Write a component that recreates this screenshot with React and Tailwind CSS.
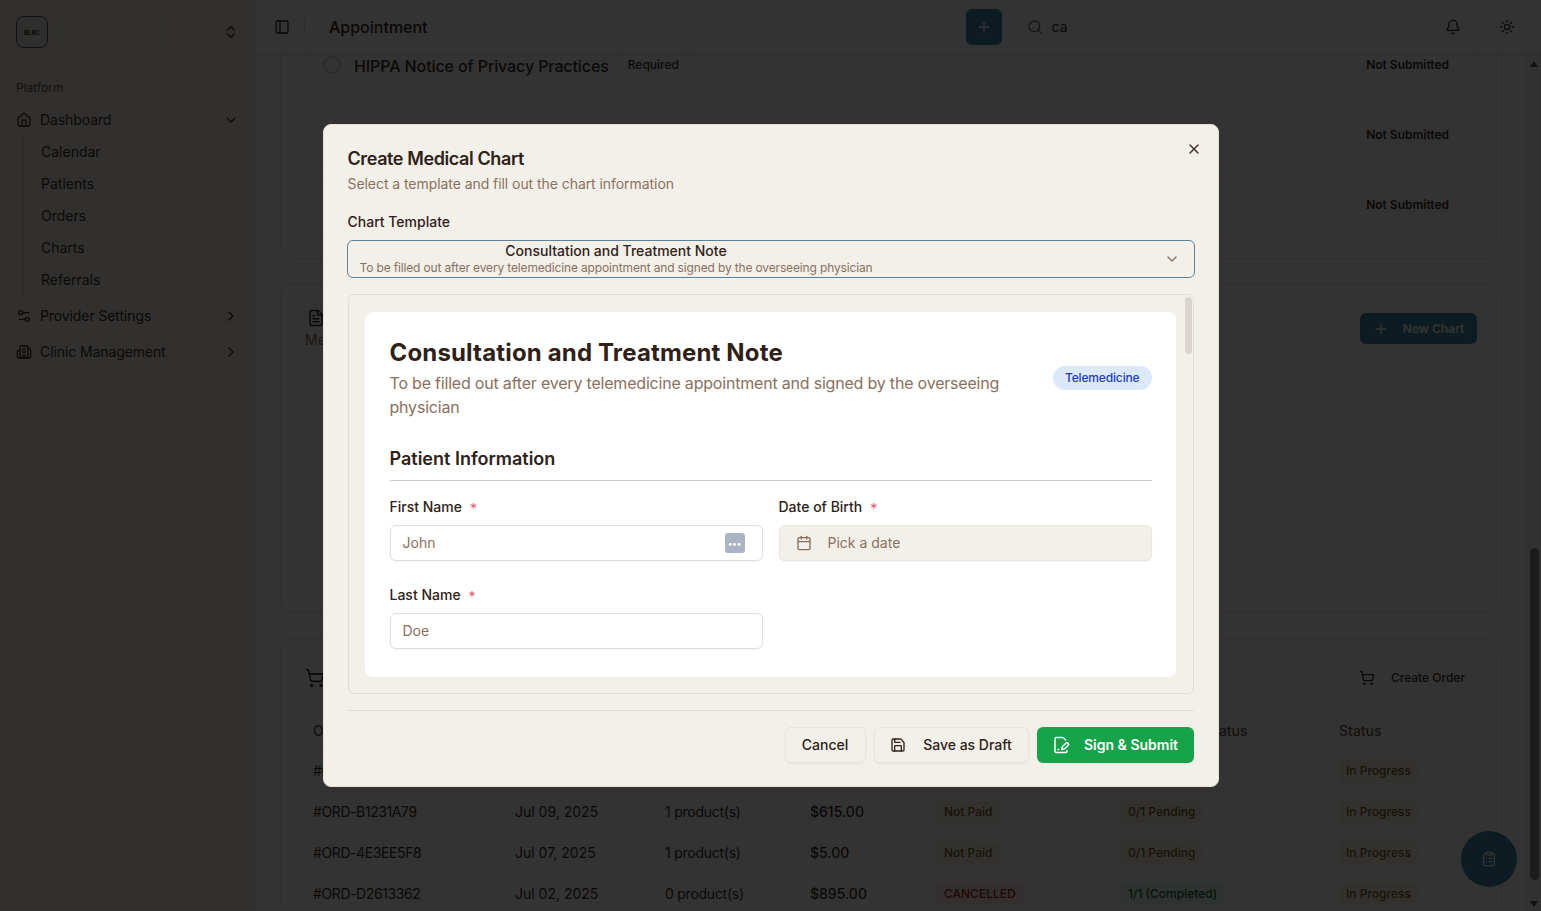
import React from "react";
import {
  Bell,
  Building2,
  Calendar,
  ChevronDown,
  ChevronRight,
  ChevronsUpDown,
  ClipboardList,
  FilePenLine,
  FileText,
  House,
  PanelLeft,
  Plus,
  Save,
  Search,
  Settings2,
  ShoppingCart,
  Sun,
  X,
} from "lucide-react";

const subItems = ["Calendar", "Patients", "Orders", "Charts", "Referrals"];

const orders = [
  { id: "#ORD", date: "", products: "", amount: "", payment: "", fulfilment: "", status: "In Progress" },
  { id: "#ORD-B1231A79", date: "Jul 09, 2025", products: "1 product(s)", amount: "$615.00", payment: "Not Paid", fulfilment: "0/1 Pending", status: "In Progress" },
  { id: "#ORD-4E3EE5F8", date: "Jul 07, 2025", products: "1 product(s)", amount: "$5.00", payment: "Not Paid", fulfilment: "0/1 Pending", status: "In Progress" },
  { id: "#ORD-D2613362", date: "Jul 02, 2025", products: "0 product(s)", amount: "$895.00", payment: "CANCELLED", fulfilment: "1/1 (Completed)", status: "In Progress" },
];

function Badge({ children, color }) {
  return <span className={`rounded px-[7px] py-[3px] text-xs font-medium ${color}`}>{children}</span>;
}

function Sidebar() {
  return (
    <aside className="flex w-[255px] shrink-0 flex-col border-r border-[#e4dfd7] bg-[#f3f0ea] px-4 pt-4 pb-4 text-[#3a2e26]">
      <div className="flex h-8 items-center">
        <div className="flex size-8 items-center justify-center rounded-lg border border-[#4a5660] bg-[#e9e8e6] text-[6px] font-bold">
          BLBC
        </div>
        <div className="ml-4 h-8 w-[100px] rounded bg-[#f1e9e2] blur-sm" />
        <ChevronsUpDown className="ml-auto -mr-[1px] size-4" />
      </div>
      <p className="mt-8 text-xs leading-4 text-[#6d5a4d]">Platform</p>
      <div className="mt-3 flex h-6 items-center gap-2 text-sm tracking-[-0.1px]">
        <House className="size-4" />
        Dashboard
        <ChevronDown className="ml-auto -mr-[1px] size-4" />
      </div>
      <div className="ml-[7px] border-l border-[#ddd7ce] pl-[17px] pt-1 pb-1">
        {subItems.map((item) => (
          <div key={item} className="flex h-8 items-center text-sm">
            {item}
          </div>
        ))}
      </div>
      <div className="mt-1 flex h-6 items-center gap-2 text-sm tracking-[-0.1px]">
        <Settings2 className="size-4" />
        Provider Settings
        <ChevronRight className="ml-auto -mr-[1px] size-4" />
      </div>
      <div className="mt-3 flex h-6 items-center gap-2 text-sm tracking-[-0.1px]">
        <Building2 className="size-4" />
        Clinic Management
        <ChevronRight className="ml-auto -mr-[1px] size-4" />
      </div>
      <div className="mt-auto h-[46px] rounded bg-[#f2ebe5] blur-sm" />
    </aside>
  );
}

function TopBar() {
  return (
    <header className="flex h-[55px] shrink-0 items-center border-b border-[#f0dcd0] bg-white pl-[19px] pr-4 text-[#3a2e26]">
      <PanelLeft className="size-4" />
      <div className="ml-[14px] h-4 w-px bg-[#e4dfd7]" />
      <span className="ml-6 text-base font-medium">Appointment</span>
      <button className="ml-[538px] flex size-9 items-center justify-center rounded-md bg-[#3f8ba8] text-white">
        <Plus className="size-4" />
      </button>
      <div className="ml-4 flex h-9 w-[400px] items-center gap-[9px] rounded-md border border-[#f5f3f0] px-2 text-sm">
        <Search className="size-4 text-[#7d5f50]" />
        ca
      </div>
      <button className="ml-[18px] flex size-9 items-center justify-center">
        <Bell className="size-4" />
      </button>
      <button className="ml-[18px] flex size-9 items-center justify-center rounded-md border border-[#f5f3f0]">
        <Sun className="size-4" />
      </button>
    </header>
  );
}

function DocRow({ children, title }) {
  return (
    <div className="flex h-[56px] items-center rounded-lg border border-[#f2efe9] pl-[17px] pr-[19px]">
      {title}
      <span className="ml-auto rounded px-2 py-1 text-xs font-semibold">{children}</span>
    </div>
  );
}

function Content() {
  return (
    <div className="min-w-0 flex-1 overflow-hidden pl-[25px] pr-[24px] text-[#3a2e26]">
      {/* scrolled part way down the page */}
      <div className="-mt-[38px] flex flex-col">
        <section className="flex h-[242px] flex-col justify-end gap-[14px] rounded-xl border border-[#f5e2dc] px-6 pb-[25px]">
          <DocRow
            title={
              <div className="flex items-center">
                <span className="size-[18px] rounded-full border-2 border-[#d8d4cd]" />
                <span className="ml-[13px] text-base leading-6 font-medium tracking-[-0.1px] translate-y-px">
                  HIPPA Notice of Privacy Practices
                </span>
                <span className="ml-2 rounded border border-[#f2efe9] px-[10px] py-[2px] text-xs font-medium">Required</span>
              </div>
            }
          >
            Not Submitted
          </DocRow>
          <DocRow>Not Submitted</DocRow>
          <DocRow>Not Submitted</DocRow>
        </section>

        <section className="mt-6 h-[330px] rounded-xl border border-[#f5e2dc] px-6 pt-6">
          <div className="flex items-start justify-between">
            <div>
              <FileText className="ml-[2px] mt-[1px] size-[18px]" />
              <p className="mt-[3px] text-sm text-[#7d6a5d]">Medical</p>
            </div>
            <button className="mt-[5px] flex h-[31px] w-[117px] items-center justify-center gap-[14px] rounded-md bg-[#3f8ba8] text-xs font-semibold text-white">
              <Plus className="size-4" />
              New Chart
            </button>
          </div>
        </section>

        <section className="mt-[25px] rounded-xl border border-[#f5e2dc] px-6 pt-[25px]">
          <div className="flex h-7 items-center justify-between">
            <ShoppingCart className="size-5" />
            <button className="flex h-7 w-[130px] items-center justify-center gap-4 rounded-md border border-[#f5f3f0] text-xs font-medium">
              <ShoppingCart className="size-4" />
              Create Order
            </button>
          </div>
          <div className="mt-[24px] grid h-[35px] grid-cols-[202px_150px_145px_127px_184px_218px_1fr] items-center border-b border-[#f2efe9] pb-[5px] pl-2 text-sm font-medium text-[#6d5a4d]">
            <span>Order ID</span>
            <span />
            <span />
            <span />
            <span />
            <span className="pl-[84px]">Status</span>
            <span>Status</span>
          </div>
          {orders.map((order) => (
            <div
              key={order.id}
              className="grid h-[41px] grid-cols-[202px_150px_145px_127px_184px_218px_1fr] items-center border-b border-[#f2efe9] pl-2 text-sm"
            >
              <span className="tracking-[-0.4px]">{order.id}</span>
              <span>{order.date}</span>
              <span className="tracking-[-0.25px]">{order.products}</span>
              <span className="font-medium">{order.amount}</span>
              <span className="flex">
                {order.payment && (
                  <Badge color={order.payment === "CANCELLED" ? "bg-[#fdecec] text-[#a52020]" : "bg-[#fdf6e3] text-[#7a5c12]"}>
                    {order.payment}
                  </Badge>
                )}
              </span>
              <span className="flex">
                {order.fulfilment && (
                  <Badge color={order.fulfilment.startsWith("1/1") ? "bg-[#e6fbee] text-[#166534]" : "bg-[#fdf6e3] text-[#7a5c12]"}>
                    {order.fulfilment}
                  </Badge>
                )}
              </span>
              <span className="flex">
                <Badge color="bg-[#fdf6e3] text-[#7a5c12]">{order.status}</Badge>
              </span>
            </div>
          ))}
        </section>
      </div>
    </div>
  );
}

function PageScrollbar() {
  return (
    <div className="flex w-[15px] shrink-0 flex-col items-center border-l border-[#f2efe9] bg-[#fafafa]">
      <div className="mt-[6px] h-0 w-0 border-x-[4px] border-b-[6px] border-x-transparent border-b-[#555]" />
      <div className="mt-[481px] h-[332px] w-[9px] rounded-full bg-[#8d8d8d]" />
      <div className="mt-auto mb-[4px] h-0 w-0 border-x-[4px] border-t-[6px] border-x-transparent border-t-[#555]" />
    </div>
  );
}

function Field({ label, children }) {
  return (
    <div>
      <p className="flex h-5 items-center text-sm font-medium text-[#2f2118]">
        {label}
        <span className="ml-2 translate-y-[2px] font-normal text-[#e2596b]">*</span>
      </p>
      <div className="mt-2">{children}</div>
    </div>
  );
}

function ChartDialog() {
  return (
    <div className="absolute inset-0 flex items-start justify-center bg-black/80">
      <div className="relative mt-[124px] h-[663px] w-[896px] rounded-lg border border-[#e6e1d9] bg-[#f3f0ea] p-6 text-[#2f2118]">
        <X className="absolute right-[16px] top-[16px] size-4 text-[#3a2e26]" />
        <h2 className="mt-[1px] text-lg leading-[18px] font-semibold tracking-[-0.4px]">Create Medical Chart</h2>
        <p className="mt-[6px] text-sm leading-5 tracking-[-0.06px] text-[#8a7060]">
          Select a template and fill out the chart information
        </p>
        <p className="mt-[18px] text-sm leading-5 font-medium">Chart Template</p>
        <div className="-mx-px mt-2 flex h-[38px] items-center overflow-hidden rounded-md border border-[#5b8296] pl-3 pr-[14px]">
          <div className="flex flex-col items-center">
            <span className="text-sm leading-[18px] font-medium">Consultation and Treatment Note</span>
            <span className="text-xs leading-4 tracking-[-0.15px] text-[#8a7060]">
              To be filled out after every telemedicine appointment and signed by the overseeing physician
            </span>
          </div>
          <ChevronDown className="ml-auto size-4 text-[#8a7060]" />
        </div>

        <div className="relative mt-4 flex h-[400px] rounded-md border border-[#e2ddd5] pt-[17px] pl-4 pr-[17px]">
          <div className="h-[365px] w-full overflow-hidden rounded-lg bg-white pt-[25px] pl-[25px] pr-6">
            <div className="flex items-center gap-[52px]">
              <div>
                <h3 className="text-2xl leading-8 font-bold tracking-[0.16px]">Consultation and Treatment Note</h3>
                <p className="mt-[2px] text-base leading-6 tracking-[-0.2px] text-[#8a7060]">
                  To be filled out after every telemedicine appointment and signed by the overseeing physician
                </p>
              </div>
              <span className="shrink-0 rounded-full bg-[#dbe9fb] px-3 py-1 text-xs font-medium tracking-[-0.15px] text-[#1e40af]">
                Telemedicine
              </span>
            </div>
            <h4 className="mt-[26px] border-b border-[#cfcac3] pb-[7px] text-lg leading-7 font-semibold">Patient Information</h4>
            <div className="mt-[16px] grid grid-cols-2 gap-x-4 gap-y-6">
              <Field label="First Name">
                <div className="flex h-9 items-center justify-between rounded-md border border-[#e2ddd5] pl-3 pr-[17px] text-sm text-[#8a7060] shadow-xs">
                  John
                  <span className="flex h-5 w-5 items-center justify-center rounded-[3px] bg-[#a9b4c4] text-[9px] font-bold leading-none text-white">
                    •••
                  </span>
                </div>
              </Field>
              <Field label="Date of Birth">
                <div className="flex h-9 items-center gap-4 rounded-md border border-[#ebe6df] bg-[#f3f0ea] pl-4 text-sm text-[#8a7060] shadow-xs">
                  <Calendar className="size-4" />
                  Pick a date
                </div>
              </Field>
              <Field label="Last Name">
                <div className="flex h-9 items-center rounded-md border border-[#e2ddd5] pl-3 text-sm text-[#8a7060] shadow-xs">Doe</div>
              </Field>
            </div>
          </div>
          <div className="absolute right-[1px] top-[2px] h-[57px] w-[7px] rounded-full bg-[#d9d4cd]" />
        </div>

        <div className="mt-4 flex justify-end gap-2 border-t border-[#e2ddd5] pt-4">
          <button className="h-9 w-[81px] rounded-md border border-[#e9e4dc] text-sm font-medium shadow-xs">Cancel</button>
          <button className="flex h-9 w-[155px] items-center justify-center gap-[17px] rounded-md border border-[#e9e4dc] text-sm font-medium shadow-xs">
            <Save className="size-4" />
            Save as Draft
          </button>
          <button className="flex h-9 w-[157px] items-center justify-center gap-[14px] rounded-md bg-[#16a34a] text-sm font-semibold text-white">
            <FilePenLine className="size-[18px]" />
            Sign &amp; Submit
          </button>
        </div>
      </div>
    </div>
  );
}

export default function App() {
  return (
    <div className="relative flex h-[911px] overflow-hidden bg-white font-['Inter',sans-serif]">
      <Sidebar />
      <div className="flex min-w-0 flex-1 flex-col">
        <TopBar />
        <div className="flex min-h-0 flex-1">
          <Content />
          <PageScrollbar />
        </div>
      </div>
      <button className="absolute left-[1461px] top-[831px] flex size-14 items-center justify-center rounded-full bg-[#3f8ba8] text-white">
        <ClipboardList className="size-4" />
      </button>
      <ChartDialog />
    </div>
  );
}
